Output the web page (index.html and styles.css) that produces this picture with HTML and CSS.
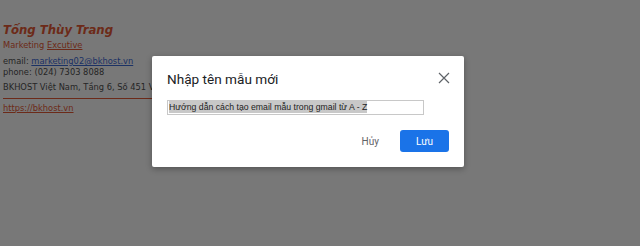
FILE: index.html
```html
<!DOCTYPE html>
<html lang="vi">
<head>
<meta charset="utf-8">
<link rel="stylesheet" href="styles.css">
</head>
<body>
<div class="sig">
  <div class="name">Tống Thùy Trang</div>
  <div class="role">Marketing <span class="u">Excutive</span></div>
  <div class="line">email: <a class="mail" href="#">marketing02@bkhost.vn</a></div>
  <div class="line">phone: (024) 7303 8088</div>
  <div class="line addr">BKHOST Việt Nam, Tầng 6, Số 451 Vũ Tông Phan, Thanh Xuân, Hà Nội</div>
  <div class="rule"></div>
  <a class="web" href="#">https://bkhost.vn</a>
</div>
<div class="overlay">
  <div class="dialog">
    <div class="head">
      <div class="title">Nhập tên mẫu mới</div>
      <svg class="close" width="12" height="12" viewBox="0 0 12 12"><path d="M1 1L11 11M11 1L1 11" stroke="#5f6368" stroke-width="1.2" fill="none"/></svg>
    </div>
    <div class="field"><span class="sel">Hướng dẫn cách tạo email mẫu trong gmail từ A - Z</span></div>
    <div class="actions">
      <span class="cancel">Hủy</span>
      <span class="save">Lưu</span>
    </div>
  </div>
</div>
</body>
</html>
```
FILE: styles.css
```css
* { box-sizing: border-box; }
html, body { margin: 0; padding: 0; }
body {
  width: 640px;
  height: 246px;
  overflow: hidden;
  background: #ffffff;
  font-family: "DejaVu Sans", Verdana, sans-serif;
  position: relative;
}
.sig {
  padding: 21px 0 0 3px;
  font-size: 8.3px;
  color: #505050;
  line-height: 11px;
}
.name {
  font-family: "DejaVu Sans Condensed", "DejaVu Sans", sans-serif;
  font-stretch: condensed;
  font-size: 13px;
  font-weight: bold;
  font-style: italic;
  color: #e65a35;
  line-height: 18px;
}
.role { color: #e65a35; margin-top: 1px; }
.role .u { text-decoration: underline; }
.line { white-space: nowrap; }
.role + .line { margin-top: 5px; }
.addr { margin-top: 4px; }
.mail { color: #3d6ad6; text-decoration: underline; }
.rule {
  width: 200px;
  height: 1px;
  background: #e65a35;
  margin-top: 5px;
}
.web {
  display: inline-block;
  margin-top: 4px;
  color: #e65a35;
  text-decoration: underline;
}
.overlay {
  position: absolute;
  inset: 0;
  background: rgba(0, 0, 0, 0.53);
  padding: 56px 0 0 152px;
}
.dialog {
  width: 312px;
  height: 111px;
  background: #fff;
  border-radius: 2px;
  box-shadow: 0 2px 6px rgba(0,0,0,0.3);
  padding: 0 0 0 15px;
  font-family: Roboto, Arial, sans-serif;
}
.head {
  display: flex;
  align-items: center;
  justify-content: space-between;
  height: 44px;
  padding: 0 16px 0 0;
}
.title {
  font-size: 13.6px;
  color: #202124;
  padding-top: 1px;
}
.close { display: block; margin-right: -2px; margin-top: -1px; }
.field {
  width: 257px;
  height: 15px;
  border: 1px solid #c8c8c8;
  padding: 0 1px;
  font-family: "Liberation Sans", Arial, sans-serif;
  font-size: 8.7px;
  line-height: 13px;
  color: #222;
  white-space: nowrap;
  overflow: hidden;
}
.sel { background: #c8c8c8; padding: 1px 0; }
.actions {
  display: flex;
  justify-content: flex-end;
  align-items: center;
  gap: 21px;
  padding: 15px 15px 0 0;
}
.cancel {
  font-size: 10px;
  color: #5f6368;
}
.save {
  width: 49px;
  height: 22px;
  background: #1a73e8;
  color: #fff;
  border-radius: 3px;
  font-size: 10px;
  display: flex;
  align-items: center;
  justify-content: center;
}
```
